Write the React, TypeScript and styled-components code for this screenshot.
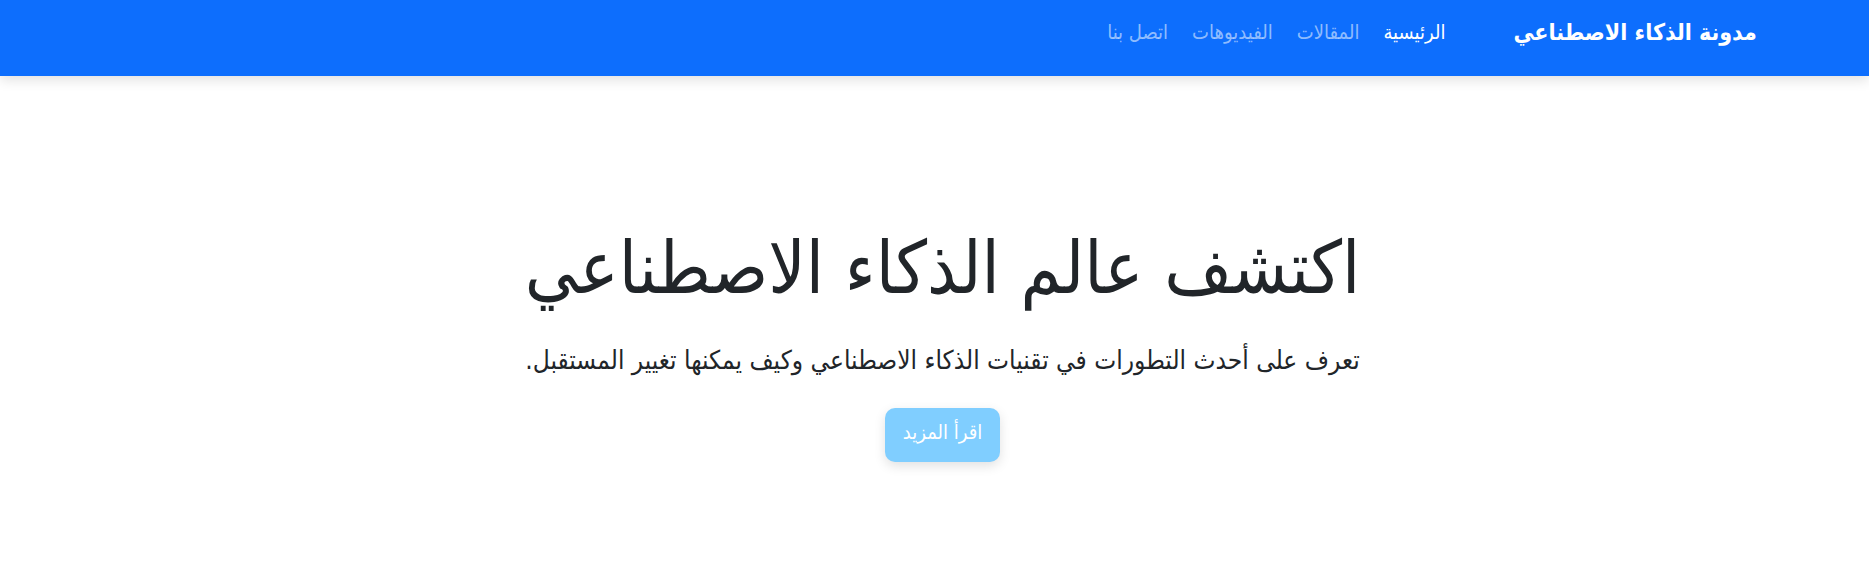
import React from 'react';
import styled, { createGlobalStyle } from 'styled-components';

const GlobalStyle = createGlobalStyle`
  *, *::before, *::after { box-sizing: border-box; }
  body {
    margin: 0;
    background: #fff;
    color: #212529;
    font-family: "DejaVu Sans Condensed", "DejaVu Sans", sans-serif;
    font-size: 20px;
    line-height: 32px;
  }
`;

const Header = styled.header`
  background: #0d6efd;
  box-shadow: 0 4px 12px rgba(0, 0, 0, 0.12);
`;

const Bar = styled.nav`
  display: flex;
  align-items: center;
  gap: 68px;
  min-height: 76px;
  padding: 0 6% 12px;
`;

const Brand = styled.a`
  color: #fff;
  font-size: 23px;
  font-weight: 700;
  text-decoration: none;
`;

const Menu = styled.ul`
  display: flex;
  gap: 24px;
  margin: 0;
  padding: 0;
  list-style: none;
`;

const MenuLink = styled.a<{ $active?: boolean }>`
  color: ${({ $active }) => ($active ? '#fff' : 'rgba(255, 255, 255, 0.55)')};
  text-decoration: none;
`;

const Hero = styled.main`
  display: flex;
  flex-direction: column;
  align-items: center;
  padding: 144px 24px 48px 40px;
  text-align: center;
`;

const Title = styled.h1`
  margin: 0 0 24px;
  font-size: 73px;
  line-height: 96px;
  font-weight: 400;
`;

const Lead = styled.p`
  margin: 0 0 28px;
  font-size: 26px;
  line-height: 40px;
`;

const MoreButton = styled.button`
  padding: 8px 18px 14px;
  border: 0;
  border-radius: 10px;
  background: #80ceff;
  color: #fff;
  font: inherit;
  box-shadow: 0 4px 12px rgba(0, 0, 0, 0.12);
  cursor: pointer;
`;

const links = ['الرئيسية', 'المقالات', 'الفيديوهات', 'اتصل بنا'];

export default function App() {
  return (
    <div dir="rtl" lang="ar">
      <GlobalStyle />
      <Header>
        <Bar>
          <Brand href="#">مدونة الذكاء الاصطناعي</Brand>
          <Menu>
            {links.map((label, i) => (
              <li key={label}>
                <MenuLink href="#" $active={i === 0}>{label}</MenuLink>
              </li>
            ))}
          </Menu>
        </Bar>
      </Header>
      <Hero>
        <Title>اكتشف عالم الذكاء الاصطناعي</Title>
        <Lead>تعرف على أحدث التطورات في تقنيات الذكاء الاصطناعي وكيف يمكنها تغيير المستقبل.</Lead>
        <MoreButton type="button">اقرأ المزيد</MoreButton>
      </Hero>
    </div>
  );
}
